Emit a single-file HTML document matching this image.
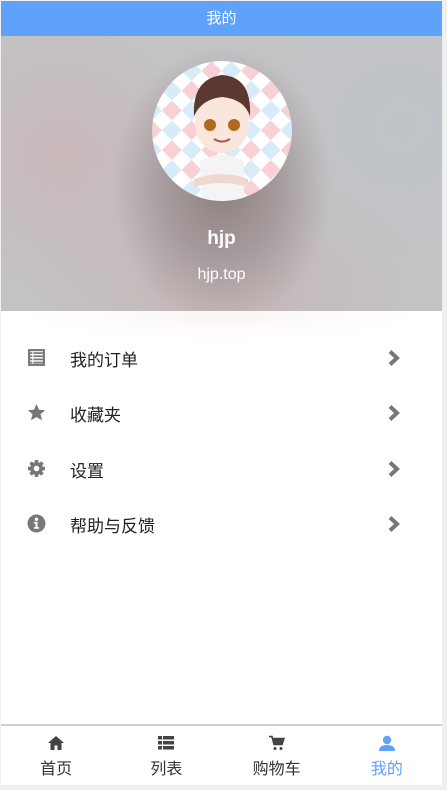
<!DOCTYPE html>
<html><head><meta charset="utf-8"><style>
*{margin:0;padding:0;box-sizing:border-box}
html,body{width:447px;height:790px;overflow:hidden;background:#f0f0f0;font-family:"Liberation Sans","Noto Sans CJK SC",sans-serif}
.app{position:absolute;left:1px;top:1px;width:441px;height:784px;background:#fff}
.hd{height:35px;background:#5ea2fb;color:#fff;text-align:center;line-height:35px;font-size:15px}
.hero{position:absolute;top:35px;left:0;width:441px;height:275px;overflow:hidden;
background:radial-gradient(ellipse 110px 140px at 221px 150px,#8e7f7e 0%,#a59a9b 50%,rgba(190,185,188,0) 100%),
radial-gradient(ellipse 160px 150px at 60px 120px,#c8b8ba,rgba(200,190,192,0)),
radial-gradient(ellipse 160px 150px at 400px 90px,#bfc3c7,rgba(190,195,200,0)),
radial-gradient(ellipse 200px 120px at 221px 250px,#c6b6b6,rgba(200,190,190,0)),#c3c3c5}
.av{position:absolute;left:151px;top:25px;width:140px;height:140px;border-radius:50%;overflow:hidden}
.name{position:absolute;top:192px;width:100%;text-align:center;color:#fff;font-weight:bold;font-size:19px}
.site{position:absolute;top:230px;width:100%;text-align:center;color:#fff;font-size:16px}
.fade{position:absolute;top:310px;left:0;width:441px;height:40px;background:radial-gradient(ellipse 200px 30px at 221px 0,#fbf4f4,#fff)}
.item{position:absolute;left:0;width:441px;height:30px}
.item .ic{position:absolute;left:26px;top:5px;width:19px;height:19px}
.item .t{position:absolute;left:69px;top:3px;font-size:17px;color:#222}
.item .ch{position:absolute;left:385px;top:6px}
.tab{position:absolute;top:723px;left:0;width:441px;height:61px;border-top:2px solid #d0d0d0;display:flex}
.tb{flex:1;text-align:center;color:#333;font-size:16px}
.tb svg{display:block;margin:9px auto 4px}
.tb.on{color:#5ea2fb}
</style></head><body>
<div class="app">
<div class="hd">我的</div>
<div class="hero">
<div class="av"><svg width="140" height="140" viewBox="0 0 140 140">
<defs><pattern id="p" width="28" height="28" patternUnits="userSpaceOnUse" patternTransform="rotate(45)">
<rect width="28" height="28" fill="#fff"/><rect width="14" height="14" fill="#d8ebf8"/><rect x="14" y="14" width="14" height="14" fill="#f8d0d6"/></pattern></defs>
<rect width="140" height="140" fill="url(#p)"/>
<path d="M50 140 L48 100 Q70 88 92 100 L92 140Z" fill="#f4f4f6"/>
<path d="M42 118 Q70 108 96 118 L96 126 Q70 118 42 126Z" fill="#f2d6d0"/>
<ellipse cx="70" cy="62" rx="27" ry="30" fill="#fbe6de"/>
<path d="M42 55 Q40 18 70 14 Q100 16 98 55 Q92 38 70 36 Q50 38 42 55Z" fill="#5a3a30"/>
<circle cx="58" cy="64" r="6" fill="#b06a20"/><circle cx="82" cy="64" r="6" fill="#b06a20"/>
<path d="M62 78 Q70 83 78 78" stroke="#a55" stroke-width="2" fill="none"/>
</svg></div>
<div class="name">hjp</div>
<div class="site">hjp.top</div>
</div>
<div class="fade"></div>

<div class="item" style="top:342px">
<svg class="ic" viewBox="0 0 18 18"><rect x="1" y="1" width="16" height="16" fill="#777"/><rect x="3" y="3" width="12" height="12" fill="#fff"/><g fill="#777"><rect x="3" y="4" width="2" height="1.6"/><rect x="6" y="4" width="9" height="1.6"/><rect x="3" y="7" width="2" height="1.6"/><rect x="6" y="7" width="9" height="1.6"/><rect x="3" y="10" width="2" height="1.6"/><rect x="6" y="10" width="9" height="1.6"/><rect x="3" y="13" width="2" height="1.6"/><rect x="6" y="13" width="9" height="1.6"/></g></svg>
<span class="t">我的订单</span>
<svg class="ch" width="16" height="18" viewBox="0 0 16 18"><path d="M4 2.5l7 6.5-7 6.5" stroke="#777" stroke-width="4" fill="none"/></svg></div>

<div class="item" style="top:397px">
<svg class="ic" viewBox="0 0 18 18"><path d="M9 1l2.4 5.4 5.8.5-4.4 3.8 1.4 5.7L9 13.4l-5.2 3 1.4-5.7L.8 6.9l5.8-.5z" fill="#777"/></svg>
<span class="t">收藏夹</span>
<svg class="ch" width="16" height="18" viewBox="0 0 16 18"><path d="M4 2.5l7 6.5-7 6.5" stroke="#777" stroke-width="4" fill="none"/></svg></div>

<div class="item" style="top:453px">
<svg class="ic" viewBox="0 0 18 18"><g fill="#777"><circle cx="9" cy="9" r="6"/><rect x="7.3" y="1" width="3.4" height="16"/><rect x="7.3" y="1" width="3.4" height="16" transform="rotate(45 9 9)"/><rect x="7.3" y="1" width="3.4" height="16" transform="rotate(90 9 9)"/><rect x="7.3" y="1" width="3.4" height="16" transform="rotate(135 9 9)"/></g><circle cx="9" cy="9" r="2.6" fill="#fff"/></svg>
<span class="t">设置</span>
<svg class="ch" width="16" height="18" viewBox="0 0 16 18"><path d="M4 2.5l7 6.5-7 6.5" stroke="#777" stroke-width="4" fill="none"/></svg></div>

<div class="item" style="top:508px">
<svg class="ic" viewBox="0 0 18 18"><circle cx="9" cy="9" r="8.5" fill="#777"/><circle cx="9" cy="5" r="1.6" fill="#fff"/><path d="M6.5 7.5h3.5v5h1.5v1.5h-5v-1.5h1.5v-3.5h-1.5z" fill="#fff"/></svg>
<span class="t">帮助与反馈</span>
<svg class="ch" width="16" height="18" viewBox="0 0 16 18"><path d="M4 2.5l7 6.5-7 6.5" stroke="#777" stroke-width="4" fill="none"/></svg></div>

<div class="tab">
<div class="tb"><svg width="18" height="16" viewBox="0 0 18 16"><path d="M9 1L1 8h2.5v7h4v-4.5h3V15h4V8H17z" fill="#444"/></svg>首页</div>
<div class="tb"><svg width="18" height="16" viewBox="0 0 18 16"><g fill="#444"><rect x="1" y="1" width="4" height="3.5"/><rect x="6" y="1" width="11" height="3.5"/><rect x="1" y="6" width="4" height="3.5"/><rect x="6" y="6" width="11" height="3.5"/><rect x="1" y="11" width="4" height="3.5"/><rect x="6" y="11" width="11" height="3.5"/></g></svg>列表</div>
<div class="tb"><svg width="18" height="16" viewBox="0 0 18 16"><path d="M1 1.5h3l2 8h8l2-6H5" stroke="#444" stroke-width="1.6" fill="#444"/><circle cx="7" cy="13.5" r="1.5" fill="#444"/><circle cx="13" cy="13.5" r="1.5" fill="#444"/></svg>购物车</div>
<div class="tb on"><svg width="18" height="16" viewBox="0 0 18 16"><circle cx="9" cy="5" r="4.2" fill="#5ea2fb"/><path d="M1 16q0-6 8-6t8 6z" fill="#5ea2fb"/></svg>我的</div>
</div>
</div>
</body></html>
